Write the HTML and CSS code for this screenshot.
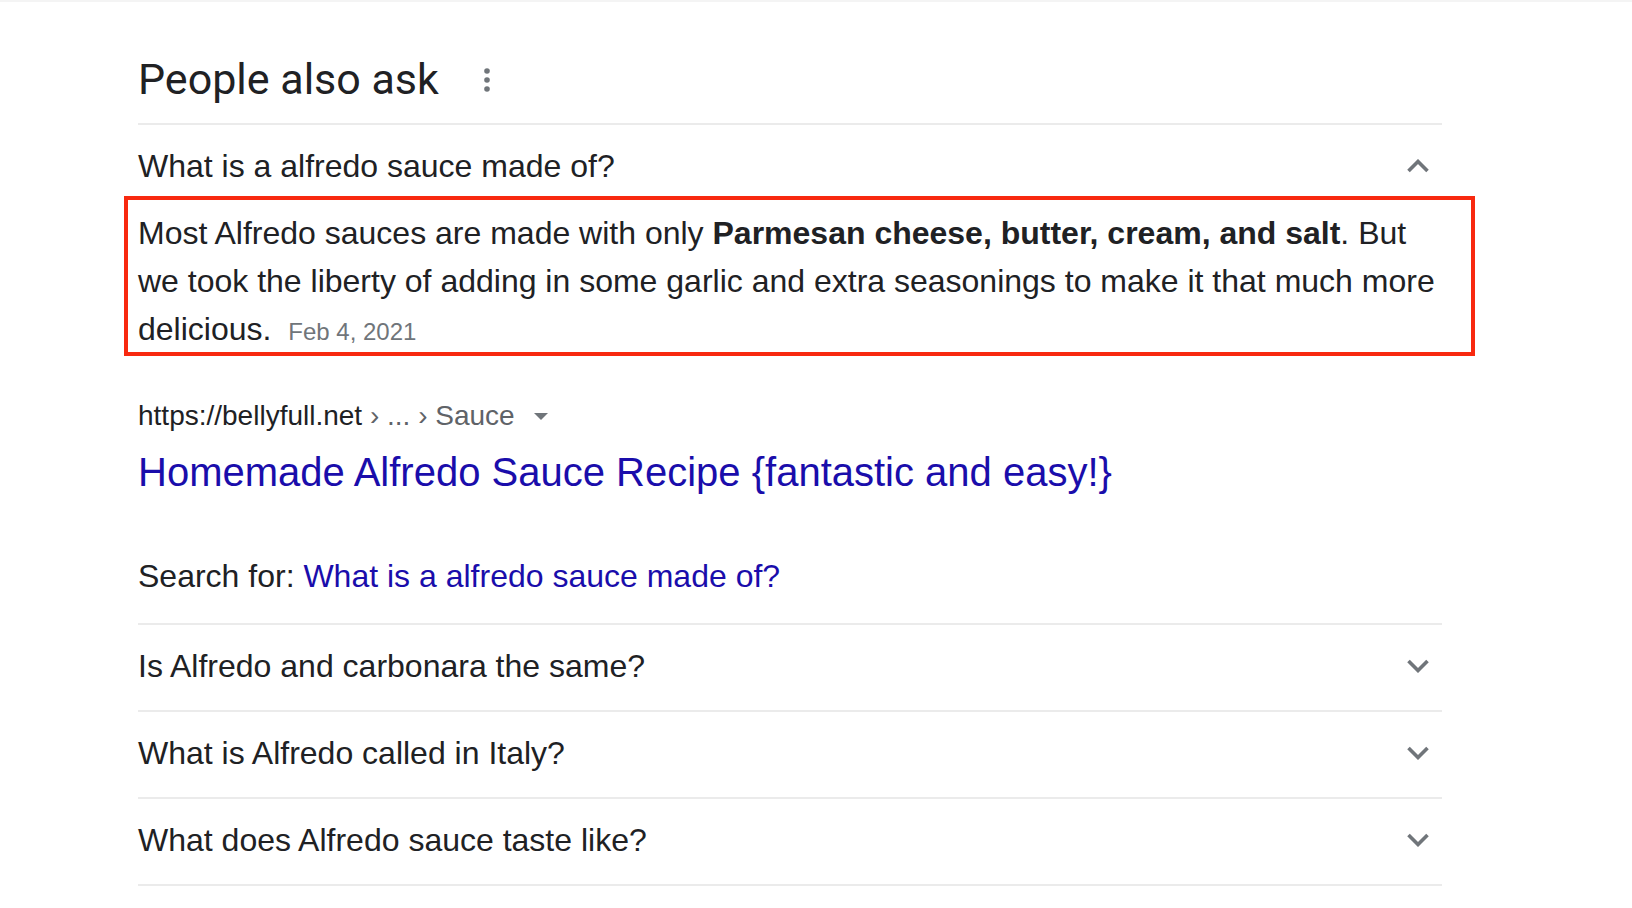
FILE: index.html
```html
<!DOCTYPE html>
<html lang="en">
<head>
<meta charset="utf-8">
<title>People also ask</title>
<link rel="stylesheet" href="styles.css">
</head>
<body>
<div class="page">
  <div class="paa">
    <div class="paa-header">
      <h2 class="paa-title">People also ask</h2>
      <svg class="more-icon" width="6" height="24" viewBox="0 0 6 24" aria-hidden="true">
        <circle cx="3" cy="3" r="2.8"/>
        <circle cx="3" cy="12" r="2.8"/>
        <circle cx="3" cy="21" r="2.8"/>
      </svg>
    </div>

    <div class="question question-open">
      <span>What is a alfredo sauce made of?</span>
      <svg class="chevron" width="24" height="14" viewBox="0 0 24 14" aria-hidden="true"><path d="M2.5 12 L12 2.5 L21.5 12"/></svg>
    </div>

    <div class="answer">
      <p class="answer-text">Most Alfredo sauces are made with only <b>Parmesan cheese, butter, cream, and salt</b>. But we took the liberty of adding in some garlic and extra seasonings to make it that much more delicious. <span class="answer-date">Feb 4, 2021</span></p>
    </div>

    <div class="source">
      <div class="source-url">
        <span class="domain">https://bellyfull.net</span><span class="crumbs"> › ... › Sauce</span>
        <span class="url-menu"></span>
      </div>
      <a class="source-title" href="#">Homemade Alfredo Sauce Recipe {fantastic and easy!}</a>
    </div>

    <div class="search-for">Search for: <a href="#">What is a alfredo sauce made of?</a></div>

    <div class="question">
      <span>Is Alfredo and carbonara the same?</span>
      <svg class="chevron" width="24" height="14" viewBox="0 0 24 14" aria-hidden="true"><path d="M2.5 2 L12 11.5 L21.5 2"/></svg>
    </div>
    <div class="question">
      <span>What is Alfredo called in Italy?</span>
      <svg class="chevron" width="24" height="14" viewBox="0 0 24 14" aria-hidden="true"><path d="M2.5 2 L12 11.5 L21.5 2"/></svg>
    </div>
    <div class="question question-last">
      <span>What does Alfredo sauce taste like?</span>
      <svg class="chevron" width="24" height="14" viewBox="0 0 24 14" aria-hidden="true"><path d="M2.5 2 L12 11.5 L21.5 2"/></svg>
    </div>
  </div>
</div>
</body>
</html>
```

FILE: styles.css
```css
html, body {
  margin: 0;
  padding: 0;
  background: #ffffff;
}

body {
  font-family: "Liberation Sans", Arial, sans-serif;
  color: #202124;
  border-top: 2px solid #f4f4f4;
}

.page {
  padding-left: 138px;
}

.paa {
  width: 1304px;
}

/* Heading row */
.paa-header {
  display: flex;
  align-items: center;
  padding: 51px 0 18px;
}

.paa-title {
  margin: 0;
  font-family: Roboto, "Liberation Sans", sans-serif;
  font-weight: 400;
  font-size: 43px;
  line-height: 52px;
  color: #202124;
}

.more-icon {
  fill: #70757a;
  margin-left: 45px;
  margin-top: 2px;
}

/* Question rows */
.question {
  display: flex;
  align-items: center;
  justify-content: space-between;
  border-top: 2px solid #ebebeb;
  padding: 17px 0 20px;
  font-size: 32px;
  line-height: 48px;
}

.question-open {
  padding-bottom: 6px;
}

.question-last {
  border-bottom: 2px solid #ebebeb;
}

.chevron {
  margin-right: 12px;
  fill: none;
  stroke: #70757a;
  stroke-width: 3.6;
}

/* Highlighted answer */
.answer {
  border: 4px solid #f8290f;
  margin: 0 -33px 0 -14px;
  padding: 9px 29px 0 10px;
}

.answer-text {
  margin: 0 0 -4px;
  font-size: 32px;
  line-height: 48px;
}

.answer-text b {
  font-weight: 700;
}

.answer-date {
  margin-left: 8px;
  font-size: 24px;
  color: #70757a;
}

/* Source */
.source {
  margin-top: 38px;
}

.source-url {
  display: flex;
  align-items: center;
  font-size: 28px;
  line-height: 44px;
}

.crumbs {
  color: #5f6368;
  white-space: pre;
}

.url-menu {
  width: 0;
  height: 0;
  margin-left: 19px;
  border-left: 7px solid transparent;
  border-right: 7px solid transparent;
  border-top: 7px solid #70757a;
}

.source-title {
  display: block;
  margin-top: 8px;
  font-size: 40px;
  line-height: 52px;
  color: #1a0dab;
  text-decoration: none;
}

.search-for {
  margin: 54px 0 23px;
  font-size: 32px;
  line-height: 48px;
}

.search-for a {
  color: #1a0dab;
  text-decoration: none;
}
```
